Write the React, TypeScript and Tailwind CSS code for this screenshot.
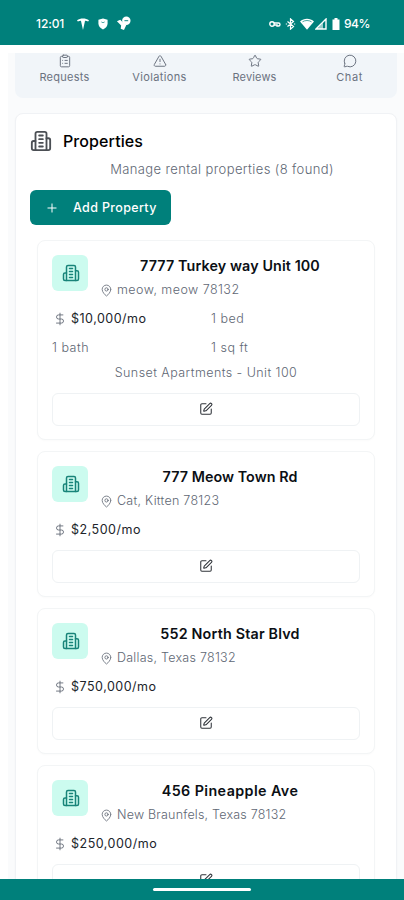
import React from 'react';
import { ClipboardList, DollarSign, MapPin, MessageCircle, Plus, SquarePen, Star, TriangleAlert } from 'lucide-react';

const navItems = [
  { label: 'Requests', icon: ClipboardList, tracking: 'tracking-[0.25px]' },
  { label: 'Violations', icon: TriangleAlert, tracking: 'tracking-[0.35px]' },
  { label: 'Reviews', icon: Star, tracking: 'tracking-[0.15px]' },
  { label: 'Chat', icon: MessageCircle, tracking: 'tracking-[0.6px]' },
];

const properties = [
  {
    name: '7777 Turkey way Unit 100',
    nameTracking: 'tracking-[0.12px]',
    location: 'meow, meow 78132',
    locationTracking: 'tracking-[0.45px]',
    rent: '$10,000/mo',
    details: ['1 bed', '1 bath', '1 sq ft'],
    complex: 'Sunset Apartments - Unit 100',
  },
  {
    name: '777 Meow Town Rd',
    nameTracking: 'tracking-[0.06px]',
    location: 'Cat, Kitten 78123',
    locationTracking: 'tracking-[0.27px]',
    rent: '$2,500/mo',
    details: [],
    complex: '',
  },
  {
    name: '552 North Star Blvd',
    nameTracking: 'tracking-[0.2px]',
    location: 'Dallas, Texas 78132',
    locationTracking: 'tracking-[0.25px]',
    rent: '$750,000/mo',
    details: [],
    complex: '',
  },
  {
    name: '456 Pineapple Ave',
    nameTracking: 'tracking-[0.42px]',
    location: 'New Braunfels, Texas 78132',
    locationTracking: 'tracking-[0.2px]',
    rent: '$250,000/mo',
    details: [],
    complex: '',
  },
];

const BuildingIcon = ({ className }: { className?: string }) => (
  <svg viewBox="0 0 24 24" fill="none" stroke="currentColor" strokeWidth="2" strokeLinecap="round" strokeLinejoin="round" className={className}>
    <path d="M6 22V4a2 2 0 0 1 2-2h8a2 2 0 0 1 2 2v18Z" />
    <path d="M6 12H4a2 2 0 0 0-2 2v6a2 2 0 0 0 2 2h2" />
    <path d="M18 9h2a2 2 0 0 1 2 2v9a2 2 0 0 1-2 2h-2" />
    <path d="M10 6h4M10 10h4M10 14h4M10 18h4" />
  </svg>
);

const StatusBar = () => (
  <header className="h-[45px] shrink-0 bg-[#00807b] text-white flex items-center justify-between pl-9 pr-[35px] pt-0.5">
    <div className="flex items-center">
      <span className="w-[29px] text-[12px] font-medium tracking-[-0.1px]">12:01</span>
      <svg viewBox="0 0 14 14" className="ml-3 w-3 h-3" fill="currentColor">
        <path d="M0 2.5C4-.2 10-.2 14 2.5l-1 1.6C12 3.5 10.6 3.2 9.4 3.2L7 14 4.6 3.2C3.4 3.2 2 3.5 1 4.1Z" />
      </svg>
      <svg viewBox="0 0 12 14" className="ml-[9px] w-[10px] h-3" fill="currentColor">
        <path d="M6 .5 11.5 2v4.500c0 3-2 5.500-5.500 7C2.500 12 .5 9.500.5 6.500V2Z" />
        <path d="M4 4.500 6 5.500l2-1" fill="none" stroke="#00807b" strokeWidth=".8" />
      </svg>
      <svg viewBox="0 0 16 16" className="ml-2 w-[15px] h-[15px]" fill="currentColor">
        <path d="M1 5.500 4.500 4 7.500 7 11 9.500 8.500 15 5 13.500 5.500 10Z" />
        <circle cx="11" cy="5" r="4.500" />
        <path d="M9 5h4" fill="none" stroke="#00807b" strokeWidth="1" />
      </svg>
    </div>
    <div className="flex items-center">
      <svg viewBox="0 0 12 8" className="w-3 h-2" fill="none" stroke="currentColor" strokeWidth="1.4">
        <circle cx="3" cy="4" r="2.2" />
        <path d="M5 3h4.500a1.500 1.500 0 0 1 0 3H8V5H5" />
      </svg>
      <svg viewBox="0 0 12 14" className="ml-1 w-[11px] h-3" fill="none" stroke="currentColor" strokeWidth="1.4">
        <path d="m2.500 4 7 6L6 13V1l3.500 3-7 6M.5 7H2M10 7h1.500" />
      </svg>
      <svg viewBox="0 0 16 13" className="ml-1 w-[14px] h-3" fill="currentColor">
        <path d="M8 13 0 3.500C4.500-.4 11.500-.4 16 3.500Z" />
        <path d="M2.800 4c3-2 7.400-2 10.400 0" fill="none" stroke="#00807b" strokeWidth=".8" />
      </svg>
      <svg viewBox="0 0 12 12" className="ml-px w-3 h-3" fill="none" stroke="currentColor" strokeWidth="1.4">
        <path d="M11 1v10H1Z" />
        <path d="M8 4.500V11H2Z" fill="currentColor" stroke="none" opacity=".6" />
      </svg>
      <svg viewBox="0 0 8 12" className="ml-[5px] w-2 h-3" fill="currentColor">
        <path d="M2.500 0h3v1.500H7.500V12H.5V1.500h2Z" />
      </svg>
      <span className="ml-1 w-[25px] text-[12px] font-medium tracking-[-0.5px]">94%</span>
    </div>
  </header>
);

const PropertyCard = ({ property }: { property: (typeof properties)[number] }) => (
  <div className="rounded-lg border border-[#f3f5f6] bg-white px-[14px] pt-[14px] pb-[13px] shadow-[0_1px_2px_rgba(0,0,0,0.02)]">
    <div className="flex h-[45px] gap-3">
      <div className="w-9 h-9 shrink-0 rounded-md bg-[#ccfbef] flex items-center justify-center">
        <BuildingIcon className="ml-px w-[18px] h-[18px] text-[#188479]" />
      </div>
      <div className="flex-1">
        <h3 className="h-[22px] leading-[21px] text-center text-[14.3px] font-semibold text-[#0b0f14]">
          <span className={property.nameTracking}>{property.name}</span>
        </h3>
        <div className="flex h-[26px] items-center text-[12.5px] font-light text-[#606774]">
          <MapPin className="mr-1 w-[13px] h-[13px]" strokeWidth={1.5} />
          <span className={property.locationTracking}>{property.location}</span>
        </div>
      </div>
    </div>
    <div className="mt-[9px] grid grid-cols-2 gap-x-2.5 gap-y-[9px] text-[12.5px] font-light leading-5 tracking-[0.5px] text-[#606774]">
      <div className="flex items-center">
        <DollarSign className="ml-px mr-1 w-[14px] h-[14px]" strokeWidth={1.5} />
        <span className="font-normal text-[#20242a]">{property.rent}</span>
      </div>
      {property.details.map((detail) => (
        <span key={detail}>{detail}</span>
      ))}
    </div>
    {property.complex && (
      <p className="mt-[5px] text-center text-[12.5px] font-light leading-5 tracking-[0.44px] text-[#606774]">
        {property.complex}
      </p>
    )}
    <button className="mt-[10px] flex h-[33px] w-full items-center justify-center rounded-md border border-[#eff2f4] pb-px text-[#30343a]">
      <SquarePen className="w-[14px] h-[14px]" strokeWidth={1.8} />
    </button>
  </div>
);

const App = () => {
  return (
    <div className="h-[900px] w-full overflow-hidden flex flex-col bg-white font-['Inter',sans-serif]">
      <StatusBar />
      <main className="mt-2 ml-2 flex-1 min-h-0 overflow-hidden bg-[#fafbfc] pl-[7px] pr-[7px]">
        <nav className="grid h-[45px] grid-cols-4 rounded-b-lg bg-[#f1f5f9] pl-0.5 text-[#6b7280]">
          {navItems.map(({ label, icon: Icon, tracking }) => (
            <div key={label} className="flex flex-col items-center pt-px">
              <Icon className="w-[14px] h-[14px]" strokeWidth={1.7} />
              <span className={`text-[11px] leading-[18px] ${tracking}`}>{label}</span>
            </div>
          ))}
        </nav>

        <section className="mt-[15px] h-[800px] rounded-lg border border-[#f0f2f5] bg-white px-[14px] pt-[15px] shadow-[0_1px_2px_rgba(0,0,0,0.04)]">
          <div className="flex h-6 items-center">
            <BuildingIcon className="w-[22px] h-[22px] text-[#4b4f54]" />
            <h2 className="ml-[11px] text-[16px] font-medium tracking-[0.1px] text-black">Properties</h2>
          </div>
          <p className="mt-[6px] text-center pl-8 text-[13px] font-light leading-5 tracking-[0.38px] text-[#606774]">
            Manage rental properties (8 found)
          </p>
          <button className="mt-[11px] flex h-[35px] w-[141px] items-center rounded-md bg-[#00807b] pl-[15px] text-white">
            <Plus className="w-[14px] h-[14px]" strokeWidth={1.7} />
            <span className="ml-[14px] mt-px text-[12.5px] font-medium tracking-[0.35px]">Add Property</span>
          </button>
          <div className="mt-[15px] flex flex-col gap-[11px] px-[7px]">
            {properties.map((property) => (
              <PropertyCard key={property.name} property={property} />
            ))}
          </div>
        </section>
      </main>
      <footer className="flex h-[21px] shrink-0 items-center justify-center bg-[#00807b]">
        <div className="h-[3px] w-[98px] rounded-full bg-white" />
      </footer>
    </div>
  );
};

export default App;
